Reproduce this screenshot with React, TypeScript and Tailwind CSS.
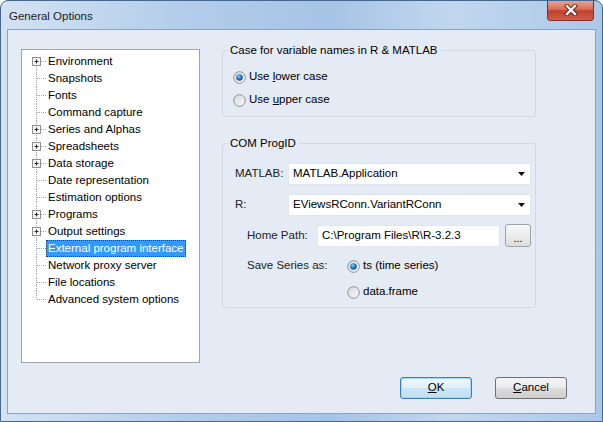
import React, { useId } from 'react';

const FONT = "font-['Liberation_Sans',Arial,sans-serif]";

const treeItems: { label: string; plus?: boolean; selected?: boolean }[] = [
  { label: 'Environment', plus: true },
  { label: 'Snapshots' },
  { label: 'Fonts' },
  { label: 'Command capture' },
  { label: 'Series and Alphas', plus: true },
  { label: 'Spreadsheets', plus: true },
  { label: 'Data storage', plus: true },
  { label: 'Date representation' },
  { label: 'Estimation options' },
  { label: 'Programs', plus: true },
  { label: 'Output settings', plus: true },
  { label: 'External program interface', selected: true },
  { label: 'Network proxy server' },
  { label: 'File locations' },
  { label: 'Advanced system options' },
];

const Radio: React.FC<{ checked?: boolean }> = ({ checked }) => {
  const id = useId().replace(/:/g, '');
  return (
    <svg width="13" height="13" viewBox="0 0 13 13" className="shrink-0">
      <defs>
        <linearGradient id={`rb${id}`} x1="0" y1="0" x2="1" y2="1">
          <stop offset="0" stopColor="#d4d6d8" />
          <stop offset="1" stopColor="#fbfbfb" />
        </linearGradient>
        <radialGradient id={`rd${id}`} cx="0.4" cy="0.35" r="0.7">
          <stop offset="0" stopColor="#8fd0ff" />
          <stop offset="0.45" stopColor="#2b83d3" />
          <stop offset="1" stopColor="#114d8c" />
        </radialGradient>
      </defs>
      <circle cx="6.5" cy="6.5" r="5.8" fill={`url(#rb${id})`} stroke="#8d9093" strokeWidth="1" />
      {checked && <circle cx="6.5" cy="6.5" r="3.3" fill={`url(#rd${id})`} />}
    </svg>
  );
};

const Combo: React.FC<{ value: string }> = ({ value }) => (
  <div className="w-[243px] h-[22px] bg-white border border-[#e2e7ef] flex items-center justify-between pl-[4px] pr-[5px]">
    <span>{value}</span>
    <svg width="7" height="4" viewBox="0 0 7 4">
      <polygon points="0,0 7,0 3.5,4" fill="#111" />
    </svg>
  </div>
);

const TreeRow: React.FC<{ label: string; plus?: boolean; selected?: boolean; first: boolean; last: boolean }> = ({
  label,
  plus,
  selected,
  first,
  last,
}) => (
  <div className="flex items-center h-[17px]">
    <svg width="24" height="17" viewBox="0 0 24 17" className="shrink-0">
      <line
        x1="14.5"
        y1={first ? 8.5 : 0}
        x2="14.5"
        y2={last ? 8.5 : 17}
        stroke="#a3a3a3"
        strokeWidth="1"
        strokeDasharray="1 1"
      />
      <line x1="15" y1="8.5" x2="24" y2="8.5" stroke="#a3a3a3" strokeWidth="1" strokeDasharray="1 1" />
      {plus && (
        <g>
          <rect x="10.5" y="4.5" width="8" height="8" fill="#f4f4f4" stroke="#8f8f8f" strokeWidth="1" />
          <line x1="12.5" y1="8.5" x2="16.5" y2="8.5" stroke="#2a2a2a" strokeWidth="1" />
          <line x1="14.5" y1="6.5" x2="14.5" y2="10.5" stroke="#2a2a2a" strokeWidth="1" />
        </g>
      )}
    </svg>
    <span
      className={
        selected
          ? 'h-[17px] leading-[15px] px-[1px] bg-[#3399ff] text-white border border-dotted border-[#1f3d6a]'
          : 'px-[2px]'
      }
    >
      {label}
    </span>
  </div>
);

export default function App() {
  return (
    <div
      className={`${FONT} w-[603px] h-[422px] flex flex-col rounded-t-[8px] border border-[#45668f] overflow-hidden text-[11.5px] text-black bg-[linear-gradient(90deg,#d3e2f2_0%,#b3cdea_30%,#a6c4e6_55%,#c2d7ee_75%,#abc8e8_100%)]`}
    >
      {/* title bar */}
      <div className="h-[28px] flex items-start justify-between">
        <span className="pl-[8px] pt-[8px] text-[11.5px] text-[#1b1b1b] leading-[14px]">General Options</span>
        <div className="mr-[8px] -mt-[1px] w-[47px] h-[21px] rounded-b-[4px] border border-[#7f3128] border-t-0 flex items-center justify-center bg-[linear-gradient(180deg,#e9a99a_0%,#d6715f_45%,#c1402c_55%,#d25e47_100%)]">
          <svg width="14" height="12" viewBox="0 0 14 12">
            <path d="M3 2 L11 10 M11 2 L3 10" stroke="#5a1d16" strokeWidth="4.2" strokeLinecap="square" />
            <path d="M3 2 L11 10 M11 2 L3 10" stroke="#ffffff" strokeWidth="2.4" strokeLinecap="square" />
          </svg>
        </div>
      </div>

      {/* client area */}
      <div className="mx-[6px] mb-[7px] flex-1 border border-[#8aa3c2] bg-[#e5ebf4] flex flex-col">
        <div className="flex items-start pt-[13px] pl-[13px]">
          {/* tree */}
          <div className="mt-[6px] w-[179px] h-[314px] bg-white border border-[#a0a4a8] pt-[3px]">
            {treeItems.map((it, i) => (
              <TreeRow
                key={it.label}
                label={it.label}
                plus={it.plus}
                selected={it.selected}
                first={i === 0}
                last={i === treeItems.length - 1}
              />
            ))}
          </div>

          {/* right column */}
          <div className="ml-[22px] w-[314px] flex flex-col">
            <fieldset className="border border-[#d0d9e4] rounded-[3px] px-[4px] pb-[8px]">
              <legend className="px-[3px] leading-[14px]">Case for variable names in R &amp; MATLAB</legend>
              <div className="mt-[12px] pl-[6px] flex flex-col gap-[7px]">
                <div className="flex items-center gap-[3px] h-[16px]">
                  <Radio checked />
                  <span>
                    Use <span className="underline">l</span>ower case
                  </span>
                </div>
                <div className="flex items-center gap-[3px] h-[16px]">
                  <Radio />
                  <span>
                    Use <span className="underline">u</span>pper case
                  </span>
                </div>
              </div>
            </fieldset>

            <fieldset className="mt-[19px] border border-[#d0d9e4] rounded-[3px] px-[4px] pb-[7px]">
              <legend className="px-[3px] leading-[14px]">COM ProgID</legend>
              <div className="mt-[13px] pl-[8px] flex items-center">
                <span className="w-[53px] text-[#222]">MATLAB:</span>
                <Combo value="MATLAB.Application" />
              </div>
              <div className="mt-[9px] pl-[8px] flex items-center">
                <span className="w-[53px] text-[#222]">R:</span>
                <Combo value="EViewsRConn.VariantRConn" />
              </div>
              <div className="mt-[8px] pl-[20px] flex items-center">
                <span className="w-[70px] text-[#222]">Home Path:</span>
                <div className="w-[183px] h-[22px] bg-white border border-[#e2e7ef] flex items-center pl-[4px]">
                  C:\Program Files\R\R-3.2.3
                </div>
                <div className="ml-[5px] w-[26px] h-[23px] rounded-[3px] border border-[#9ea3a8] bg-[linear-gradient(180deg,#f8f8f8_0%,#ececec_50%,#dcdcdc_100%)] flex items-end justify-center pb-[3px] leading-[10px] text-[11px]">
                  ...
                </div>
              </div>
              <div className="mt-[11px] pl-[20px] flex items-center h-[16px]">
                <span className="w-[100px] text-[#222]">Save Series as:</span>
                <Radio checked />
                <span className="ml-[3px]">ts (time series)</span>
              </div>
              <div className="mt-[10px] pl-[120px] flex items-center h-[16px]">
                <Radio />
                <span className="ml-[3px]">data.frame</span>
              </div>
            </fieldset>
          </div>
        </div>

        {/* buttons */}
        <div className="mt-auto pb-[14px] pr-[28px] flex justify-end gap-[23px]">
          <button className="w-[72px] h-[22px] rounded-[3px] border border-[#3c7fb1] bg-[linear-gradient(180deg,#f1f8fd_0%,#e0f0fb_50%,#c9e6f8_51%,#bfe0f5_100%)] shadow-[inset_0_0_0_1px_#a6d9f4] flex items-center justify-center">
            <span>
              <span className="underline">O</span>K
            </span>
          </button>
          <button className="w-[72px] h-[22px] rounded-[3px] border border-[#707070] bg-[linear-gradient(180deg,#f3f3f3_0%,#ebebeb_50%,#dddddd_51%,#cfcfcf_100%)] flex items-center justify-center">
            <span>
              <span className="underline">C</span>ancel
            </span>
          </button>
        </div>
      </div>
    </div>
  );
}
